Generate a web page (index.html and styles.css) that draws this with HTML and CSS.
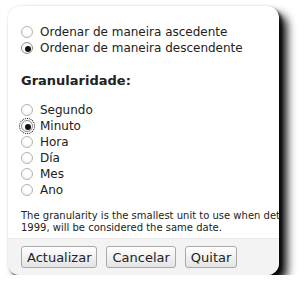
FILE: index.html
```html
<!DOCTYPE html>
<html lang="pt">
<head>
  <meta charset="UTF-8" />
  <meta name="viewport" content="width=device-width, initial-scale=1.0"/>
  <title>Granularidade</title>
  <link rel="stylesheet" href="styles.css">
</head>
<body>

  <div class="dialog">
    <div class="content">
      <div class="group">
        <label class="option"><input type="radio" name="order"> Ordenar de maneira ascedente</label>
        <label class="option"><input type="radio" name="order" checked> Ordenar de maneira descendente</label>
      </div>

      <h3>Granularidade:</h3>

      <div class="group">
        <label class="option"><input type="radio" name="gran"> Segundo</label>
        <label class="option"><input type="radio" name="gran" class="focused" checked> Minuto</label>
        <label class="option"><input type="radio" name="gran"> Hora</label>
        <label class="option"><input type="radio" name="gran"> Día</label>
        <label class="option"><input type="radio" name="gran"> Mes</label>
        <label class="option"><input type="radio" name="gran"> Ano</label>
      </div>

      <p class="note">The granularity is the smallest unit to use when determining if two dates are equal, e.g. 1/1/1999 and 31/12/<br>1999, will be considered the same date.</p>
    </div>

    <div class="actions">
      <button>Actualizar</button>
      <button>Cancelar</button>
      <button>Quitar</button>
    </div>
  </div>

</body>
</html>
```

FILE: styles.css
```css
body {
  margin: 0;
  background: #fff;
  font-family: 'DejaVu Sans', Verdana, sans-serif;
  color: #222;
}

.dialog {
  margin: 6px 0 0 8px;
  width: 271px;
  height: 269px;
  border-radius: 12px;
  background: #fff;
  overflow: hidden;
  display: flex;
  flex-direction: column;
  box-shadow: 0 0 2px rgba(0,0,0,0.15), 8px 8px 10px rgba(0,0,0,0.95), 3px 3px 3px rgba(0,0,0,0.6);
}

.content {
  flex: 1;
  padding: 18px 0 0 13px;
}

.option {
  display: flex;
  align-items: center;
  height: 16px;
  font-size: 12px;
  white-space: nowrap;
}

.option input {
  appearance: none;
  -webkit-appearance: none;
  width: 12px;
  height: 12px;
  margin: 0 7px 0 0;
  border: 1px solid #b4b4b4;
  border-radius: 50%;
  background: radial-gradient(circle at 50% 40%, #fff 40%, #ececec 100%);
  position: relative;
}

.option input:checked {
  border-color: #8c8c8c;
}

.option input:checked::after {
  content: "";
  position: absolute;
  left: 3px;
  top: 3px;
  width: 6px;
  height: 6px;
  border-radius: 50%;
  background: #111;
}

.option input.focused {
  outline: 1px dotted #000;
  outline-offset: 1px;
}

h3 {
  margin: 17px 0 13px;
  font-size: 13px;
  line-height: 16px;
  color: #222;
}

.note {
  margin: 12px 0 0;
  font-size: 10px;
  line-height: 12px;
  white-space: nowrap;
}

.actions {
  height: 37px;
  box-sizing: border-box;
  padding: 7px 0 0 13px;
  background: #f3f3f3;
  border-top: 1px solid #ebebeb;
  display: flex;
  align-items: flex-start;
  gap: 9px;
}

.actions button {
  height: 22px;
  padding: 0 5px;
  font-family: 'DejaVu Sans', Verdana, sans-serif;
  font-size: 13px;
  color: #222;
  border: 1px solid #a9a9a9;
  border-radius: 3px;
  background: linear-gradient(#fefefe, #e4e4e4);
}
```
